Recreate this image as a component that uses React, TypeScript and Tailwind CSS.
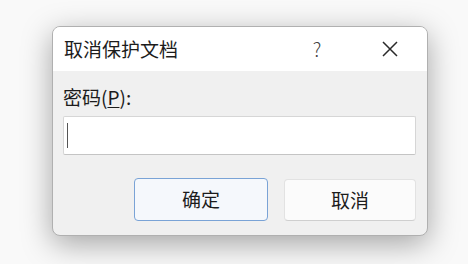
import React from "react";

export default function App() {
  const font = { fontFamily: '"Noto Sans CJK SC", "Noto Sans", sans-serif' };
  return (
    <div className="w-[468px] h-[264px] bg-[#f9f9f9] overflow-hidden pt-[26px] pl-[52px]" style={font}>
      <div className="w-[376px] h-[210px] rounded-[8px] border border-[#b0b0b0] bg-[#f0f0f0] overflow-hidden shadow-[0_8px_30px_rgba(0,0,0,0.34)] flex flex-col">
        <div className="h-[44px] bg-white flex items-center pl-[11px] shrink-0">
          <span className="text-[19px] leading-[24px] text-[#1c1c1c]">取消保护文档</span>
          <span className="ml-auto w-[20px] text-center text-[19px] leading-[24px] text-[#404040] font-light mr-[55px]">?</span>
          <svg width="16" height="16" viewBox="0 0 16 16" className="mr-[29px]">
            <path d="M1 1 L15 15 M15 1 L1 15" stroke="#2a2a2a" strokeWidth="1.5" fill="none" />
          </svg>
        </div>
        <div className="flex flex-col pl-[10px] pr-[11px] pt-[14px]">
          <div className="text-[19px] leading-[24px] text-[#1c1c1c]">
            密码(<span className="underline underline-offset-2">P</span>):
          </div>
          <div className="mt-[7px] h-[39px] bg-white border border-[#d6d6d6] border-b-[#c4c4c4] rounded-[2px] flex items-center pl-[3px]">
            <div className="w-[1px] h-[25px] bg-[#555]" />
          </div>
          <div className="mt-[23px] flex justify-end gap-[16px]">
            <button className="w-[134px] h-[43px] rounded-[4px] border border-[#7aa3d6] bg-[#f5f8fc] text-[19px] text-[#1c1c1c]">
              确定
            </button>
            <button className="w-[132px] h-[42px] mt-[1px] rounded-[4px] border border-[#e2e2e2] border-b-[#cfcfcf] bg-[#fbfbfb] text-[19px] text-[#1c1c1c]">
              取消
            </button>
          </div>
        </div>
      </div>
    </div>
  );
}
